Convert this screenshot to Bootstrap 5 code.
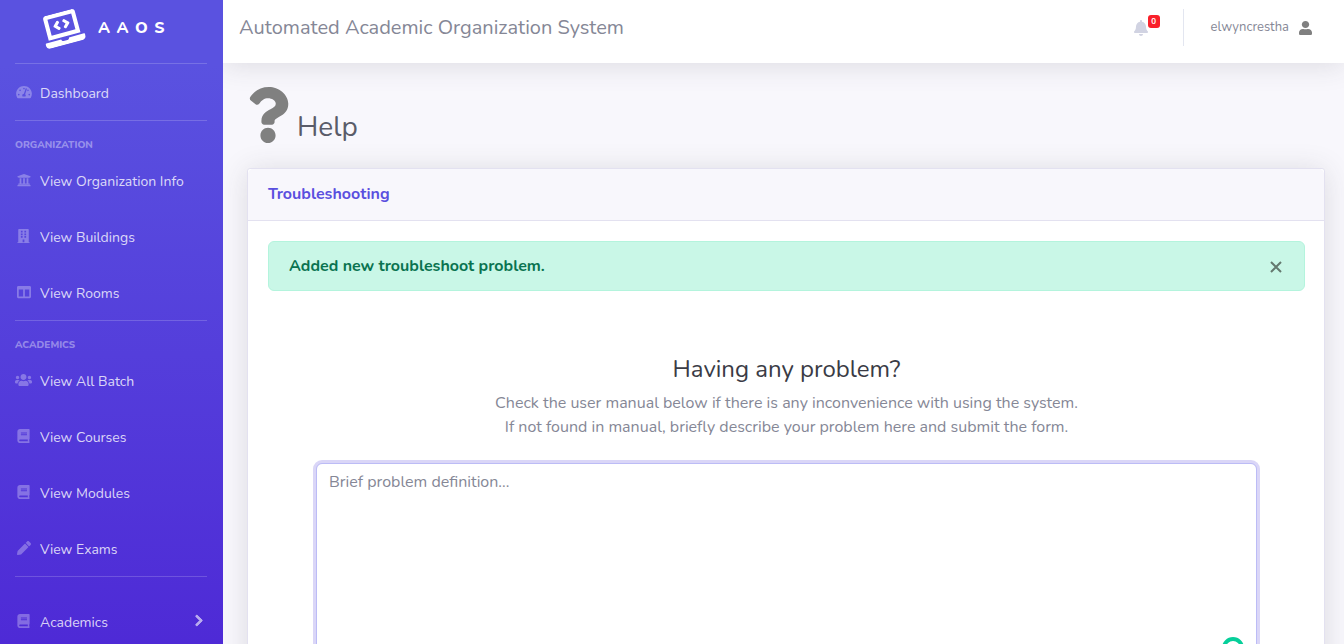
<!DOCTYPE html>
<html lang="en">
<head>
<meta charset="utf-8">
<meta name="viewport" content="width=device-width, initial-scale=1">
<title>Automated Academic Organization System</title>
<link rel="stylesheet" href="https://cdn.jsdelivr.net/npm/bootstrap@5.3.0/dist/css/bootstrap.min.css">
<style>
  body { font-family: Nunito, "Open Sans", sans-serif; font-size: 16px; color: #858796; background: #f8f7fc; }
  .fi { fill: currentColor; display: block; flex: none; }
  .side { width: 223px; flex: none; z-index: 1; background: linear-gradient(180deg, #5a52e0 10%, #4e2ad6 100%); }
  .brand { height: 56px; margin-bottom: 7px; padding-left: 42px; gap: 15px; color: #fff; font-weight: 800; letter-spacing: 1px; }
  .brand:hover { color: #fff; }
  .brand .fi { transform: rotate(-15deg); }
  .rule { border: 0; border-top: 1px solid #fff; opacity: .18; margin: 0 16px 0 15px; }
  .side-head { height: 31px; padding: 17px 15px 0; font-size: 10px; line-height: 14px; font-weight: 800; color: rgba(255,255,255,.4); margin: 0; }
  .side .nav-link { height: 56px; padding: 3px 20px 0 15px; font-size: 14px; line-height: 20px; color: rgba(255,255,255,.8); gap: 8px; }
  .side .nav-link svg { margin-bottom: 4px; }
  .ico { width: 17px; color: rgba(255,255,255,.3); display: flex; justify-content: center; flex: none; }
  .topbar { height: 63px; padding: 0 32px 8px 16px; background: #fff; box-shadow: 0 2px 28px rgba(58,59,69,.15); }
  .topbar h1 { font-size: 20px; font-weight: 400; }
  .bell { color: #d1d3e2; width: 14px; }
  .bell .badge { position: absolute; left: 14px; top: -5px; font-size: 8px; line-height: 13px; width: 12px; padding: 0; background: #f9202a; border-radius: 3px; }
  .vr-line { width: 1px; height: 37px; background: #e3e6f0; margin: 0 27px 0 35px; }
  .user { font-size: 13px; color: #858796; gap: 10px; }
  .gray { color: #808080; }
  .page { padding: 24px 19px 0 24px; }
  .page h2 { font-size: 28px; line-height: 32px; color: #5a5c69; font-weight: 400; }
  .title-row { margin-bottom: 25px; gap: 8px; }
  .panel { border: 1px solid #e3e1f0; border-radius: 3px; box-shadow: 0 2px 28px rgba(58,59,69,.15); color: #858796; }
  .panel .card-header { padding: 16px 20px; background: #f8f7fc; border-color: #e3e1f0; }
  .panel .card-header h3 { font-size: 16px; line-height: 19px; font-weight: 700; color: #5a4fdf; margin: 0; }
  .panel .card-body { padding: 20px 19px 20px 20px; }
  .done { background: #c9f7e7; border: 1px solid #b4f4dd; color: #0a7350; padding: 12px 20px; border-radius: 6px; }
  .shut { border: 0; background: none; padding: 2px 0 0; margin-right: 1px; color: #64796f; }
  .ask { padding: 62px 48px 24px; }
  .ask h4 { font-size: 24px; line-height: 32px; color: #3a3b45; font-weight: 400; margin-bottom: 6px; }
  .ask textarea, .ask textarea:focus { height: 256px; border: 1px solid #bcbcf6; border-radius: 6px; box-shadow: 0 0 0 3px #dad6f7; padding: 6px 12px; resize: none; }
  .ask textarea::placeholder { color: #858796; }
  .check { position: absolute; right: 13px; bottom: 60px; color: #06cf9a; }
</style>
</head>
<body>
<svg class="d-none" aria-hidden="true">
  <symbol id="book" viewBox="0 0 448 512"><path d="M448 360V24c0-13.3-10.7-24-24-24H96C43 0 0 43 0 96v320c0 53 43 96 96 96h328c13.3 0 24-10.7 24-24v-16c0-7.500-3.500-14.300-8.900-18.700-4.200-15.400-4.200-59.300 0-74.700 5.400-4.300 8.900-11.100 8.900-18.600zM128 134c0-3.300 2.700-6 6-6h212c3.300 0 6 2.700 6 6v20c0 3.300-2.700 6-6 6H134c-3.300 0-6-2.700-6-6v-20zm0 64c0-3.300 2.700-6 6-6h212c3.300 0 6 2.700 6 6v20c0 3.300-2.700 6-6 6H134c-3.300 0-6-2.700-6-6v-20zm253.400 250H96c-17.700 0-32-14.300-32-32 0-17.600 14.400-32 32-32h285.400c-1.900 17.100-1.900 46.900 0 64z"/></symbol>
</svg>
<div class="d-flex vh-100 overflow-hidden">
  <nav class="side position-relative" aria-label="Main">
    <a class="brand d-flex align-items-center text-decoration-none" href="#">
      <svg class="fi" width="41" height="33" viewBox="0 0 640 512" aria-hidden="true"><path d="M255.030 261.650c6.250 6.250 16.380 6.250 22.630 0l11.310-11.310c6.250-6.250 6.250-16.380 0-22.630L253.250 192l35.710-35.720c6.250-6.250 6.250-16.380 0-22.630l-11.310-11.310c-6.250-6.250-16.380-6.250-22.630 0l-58.340 58.340c-6.250 6.250-6.250 16.380 0 22.630l58.350 58.340zm96.010-11.300l11.310 11.310c6.250 6.250 16.380 6.250 22.630 0l58.340-58.340c6.250-6.250 6.250-16.380 0-22.630l-58.340-58.340c-6.250-6.250-16.380-6.250-22.630 0l-11.310 11.310c-6.250 6.250-6.250 16.380 0 22.630L386.750 192l-35.710 35.720c-6.250 6.250-6.250 16.380 0 22.630zM624 416H381.540c-.74 19.810-14.710 32-32.740 32H288c-18.690 0-33.020-17.470-32.770-32H16c-8.800 0-16 7.200-16 16v16c0 35.200 28.800 64 64 64h512c35.200 0 64-28.800 64-64v-16c0-8.800-7.200-16-16-16zM576 48c0-26.400-21.600-48-48-48H112C85.600 0 64 21.600 64 48v336h512V48zm-64 272H128V64h384v256z"/></svg>
      <span>A A O S</span>
    </a>
    <hr class="rule">
    <a class="nav-link d-flex align-items-center" href="#"><span class="ico"><svg class="fi" width="16" height="14" viewBox="0 0 576 512" aria-hidden="true"><path d="M288 32C128.940 32 0 160.940 0 320c0 52.800 14.250 102.260 39.060 144.800 5.610 9.620 16.300 15.200 27.440 15.200h443c11.140 0 21.830-5.580 27.440-15.200C561.750 422.260 576 372.800 576 320c0-159.060-128.940-288-288-288zm0 64c14.710 0 26.580 10.130 30.320 23.650-1.110 2.260-2.640 4.230-3.450 6.670l-9.220 27.670c-5.130 3.490-10.970 6.010-17.640 6.010-17.670 0-32-14.330-32-32S270.330 96 288 96zM96 384c-17.670 0-32-14.330-32-32s14.330-32 32-32 32 14.330 32 32-14.330 32-32 32zm48-160c-17.670 0-32-14.330-32-32s14.330-32 32-32 32 14.330 32 32-14.330 32-32 32zm246.770-72.410l-61.330 184C343.130 347.330 352 364.540 352 384c0 11.720-3.380 22.550-8.880 32H232.880c-5.500-9.450-8.880-20.280-8.880-32 0-33.940 26.500-61.430 59.900-63.590l61.340-184.010c4.170-12.560 17.730-19.450 30.360-15.170 12.570 4.190 19.350 17.790 15.170 30.360zm14.660 57.200l15.520-46.550c3.470-1.290 7.130-2.230 11.050-2.230 17.670 0 32 14.330 32 32s-14.330 32-32 32c-11.380-.01-21.250-6.100-26.570-15.220zM480 384c-17.670 0-32-14.330-32-32s14.330-32 32-32 32 14.330 32 32-14.330 32-32 32z"/></svg></span>Dashboard</a>
    <hr class="rule">
    <h6 class="side-head">ORGANIZATION</h6>
    <a class="nav-link d-flex align-items-center" href="#"><span class="ico"><svg class="fi" width="14" height="14" viewBox="0 0 512 512" aria-hidden="true"><path d="M496 128v16a8 8 0 0 1-8 8h-24v12c0 6.627-5.373 12-12 12H60c-6.627 0-12-5.373-12-12v-12H24a8 8 0 0 1-8-8v-16a8 8 0 0 1 4.941-7.392l232-88a7.996 7.996 0 0 1 6.118 0l232 88A8 8 0 0 1 496 128zm-24 304H40c-13.255 0-24 10.745-24 24v16a8 8 0 0 0 8 8h464a8 8 0 0 0 8-8v-16c0-13.255-10.745-24-24-24zM96 192v192H60c-6.627 0-12 5.373-12 12v20h416v-20c0-6.627-5.373-12-12-12h-36V192h-64v192h-64V192h-64v192h-64V192H96z"/></svg></span>View Organization Info</a>
    <a class="nav-link d-flex align-items-center" href="#"><span class="ico"><svg class="fi" width="13" height="14" viewBox="0 0 448 512" aria-hidden="true"><path fill-rule="evenodd" d="M436 480h-20V24c0-13.255-10.745-24-24-24H56C42.745 0 32 10.745 32 24v456H12c-6.627 0-12 5.373-12 12v20h448v-20c0-6.627-5.373-12-12-12zM128 64h64v64h-64zM256 64h64v64h-64zM128 160h64v64h-64zM256 160h64v64h-64zM128 256h64v64h-64zM256 256h64v64h-64zM192 384h64v96h-64z"/></svg></span>View Buildings</a>
    <a class="nav-link d-flex align-items-center" href="#"><span class="ico"><svg class="fi" width="14" height="14" viewBox="0 0 512 512" aria-hidden="true"><path d="M464 32H48C21.490 32 0 53.490 0 80v352c0 26.510 21.490 48 48 48h416c26.510 0 48-21.490 48-48V80c0-26.510-21.490-48-48-48zM224 416H64V160h160v256zm224 0H288V160h160v256z"/></svg></span>View Rooms</a>
    <hr class="rule">
    <h6 class="side-head">ACADEMICS</h6>
    <a class="nav-link d-flex align-items-center" href="#"><span class="ico"><svg class="fi" width="17" height="14" viewBox="0 0 640 512" aria-hidden="true"><path d="M96 224c35.300 0 64-28.700 64-64s-28.700-64-64-64-64 28.700-64 64 28.700 64 64 64zm448 0c35.300 0 64-28.700 64-64s-28.700-64-64-64-64 28.700-64 64 28.700 64 64 64zm32 32h-64c-17.600 0-33.500 7.100-45.100 18.600 40.300 22.100 68.900 62 75.100 109.400h66c17.700 0 32-14.300 32-32v-32c0-35.300-28.700-64-64-64zm-256 0c61.900 0 112-50.100 112-112S381.900 32 320 32 208 82.100 208 144s50.100 112 112 112zm76.800 32h-8.300c-20.800 10-43.900 16-68.500 16s-47.600-6-68.500-16h-8.300C179.600 288 128 339.600 128 403.200V432c0 26.500 21.500 48 48 48h288c26.500 0 48-21.500 48-48v-28.800c0-63.600-51.600-115.200-115.200-115.200zm-223.700-13.400C161.500 263.100 145.600 256 128 256H64c-35.300 0-64 28.700-64 64v32c0 17.700 14.300 32 32 32h65.900c6.300-47.400 34.900-87.300 75.200-109.400z"/></svg></span>View All Batch</a>
    <a class="nav-link d-flex align-items-center" href="#"><span class="ico"><svg class="fi" width="13" height="14" aria-hidden="true"><use href="#book"/></svg></span>View Courses</a>
    <a class="nav-link d-flex align-items-center" href="#"><span class="ico"><svg class="fi" width="13" height="14" aria-hidden="true"><use href="#book"/></svg></span>View Modules</a>
    <a class="nav-link d-flex align-items-center" href="#"><span class="ico"><svg class="fi" width="14" height="14" viewBox="0 0 512 512" aria-hidden="true"><path d="M497.900 142.100l-46.100 46.100c-4.700 4.700-12.300 4.700-17 0l-111-111c-4.700-4.700-4.700-12.300 0-17l46.100-46.100c18.700-18.700 49.100-18.700 67.900 0l60.100 60.100c18.800 18.700 18.800 49.100 0 67.900zM284.200 99.800L21.600 362.400.4 483.900c-2.900 16.400 11.400 30.600 27.800 27.800l121.500-21.300 262.600-262.600c4.700-4.700 4.700-12.300 0-17l-111-111c-4.800-4.700-12.400-4.700-17.100 0z"/></svg></span>View Exams</a>
    <hr class="rule mb-3">
    <a class="nav-link d-flex align-items-center" href="#"><span class="ico"><svg class="fi" width="13" height="14" aria-hidden="true"><use href="#book"/></svg></span>Academics
      <svg class="fi ms-auto opacity-75" width="8" height="13" viewBox="0 0 320 512" aria-hidden="true"><path stroke="currentColor" stroke-width="30" d="M285.476 272.971L91.132 467.314c-9.373 9.373-24.569 9.373-33.941 0l-22.667-22.667c-9.357-9.357-9.375-24.522-.04-33.901L188.505 256 34.484 101.255c-9.335-9.379-9.317-24.544.04-33.901l22.667-22.667c9.373-9.373 24.569-9.373 33.941 0L285.475 239.030c9.373 9.372 9.373 24.568.001 33.941z"/></svg></a>
  </nav>
  <div class="flex-grow-1">
    <header class="topbar d-flex align-items-center">
      <h1 class="mb-0 me-auto">Automated Academic Organization System</h1>
      <a class="bell position-relative" href="#" aria-label="Alerts"><svg class="fi" width="14" height="16" viewBox="0 0 448 512" aria-hidden="true"><path d="M224 512c35.320 0 63.970-28.650 63.970-64H160.030c0 35.350 28.650 64 63.970 64zm215.390-149.710c-19.320-20.760-55.470-51.990-55.470-154.290 0-77.700-54.480-139.900-127.940-155.160V32c0-17.670-14.320-32-31.980-32s-31.980 14.330-31.980 32v20.840C118.560 68.100 64.080 130.300 64.080 208c0 102.300-36.150 133.530-55.470 154.290-6 6.450-8.660 14.160-8.610 21.710.11 16.400 12.980 32 32.100 32h383.800c19.120 0 32-15.600 32.100-32 .05-7.550-2.610-15.270-8.610-21.710z"/></svg><span class="badge">0</span></a>
      <span class="vr-line"></span>
      <a class="user d-flex align-items-center text-decoration-none" href="#">elwyncrestha <svg class="fi gray" width="13" height="14" viewBox="0 0 448 512" preserveAspectRatio="none" aria-hidden="true"><path d="M224 256c70.700 0 128-57.300 128-128S294.700 0 224 0 96 57.300 96 128s57.300 128 128 128zm89.600 32h-16.700c-22.200 10.200-46.900 16-72.900 16s-50.600-5.800-72.900-16h-16.700C60.200 288 0 348.200 0 422.400V464c0 26.500 21.500 48 48 48h352c26.500 0 48-21.500 48-48v-41.600c0-74.200-60.200-134.400-134.400-134.400z"/></svg></a>
    </header>
    <main class="page">
      <div class="title-row d-flex align-items-end">
        <svg class="fi gray" width="42" height="56" viewBox="0 0 384 512" aria-hidden="true"><path d="M202.021 0C122.202 0 70.503 32.703 29.914 91.026c-7.363 10.580-5.093 25.086 5.178 32.874l43.138 32.709c10.373 7.865 25.132 6.026 33.253-4.148 25.049-31.381 43.630-49.449 82.757-49.449 30.764 0 68.816 19.799 68.816 49.631 0 22.552-18.617 34.134-48.993 51.164-35.423 19.860-82.299 44.576-82.299 106.405V320c0 13.255 10.745 24 24 24h72.471c13.255 0 24-10.745 24-24v-5.773c0-42.860 125.268-44.645 125.268-160.627C377.504 66.256 286.902 0 202.021 0zM192 373.459c-38.196 0-69.271 31.075-69.271 69.271 0 38.195 31.075 69.270 69.271 69.270s69.271-31.075 69.271-69.271-31.075-69.270-69.271-69.270z"/></svg>
        <h2 class="mb-0">Help</h2>
      </div>
      <section class="card panel">
        <div class="card-header"><h3>Troubleshooting</h3></div>
        <div class="card-body">
          <div class="done d-flex align-items-center" role="alert">
            <strong class="me-auto">Added new troubleshoot problem.</strong>
            <button class="shut" type="button" aria-label="Close"><svg class="d-block" width="14" height="14" viewBox="0 0 14 14" fill="none" stroke="currentColor" stroke-width="2" aria-hidden="true"><path d="M2 2l10 10M12 2L2 12"/></svg></button>
          </div>
          <form class="ask text-center">
            <h4>Having any problem?</h4>
            <p class="mb-4">Check the user manual below if there is any inconvenience with using the system.<br>If not found in manual, briefly describe your problem here and submit the form.</p>
            <div class="position-relative">
              <textarea class="form-control" aria-label="Brief problem definition" placeholder="Brief problem definition..."></textarea>
              <svg class="check" width="22" height="22" viewBox="0 0 22 22" fill="none" stroke="currentColor" stroke-width="4" aria-hidden="true"><circle cx="11" cy="11" r="9"/></svg>
            </div>
          </form>
        </div>
      </section>
    </main>
  </div>
</div>
<script src="https://cdn.jsdelivr.net/npm/bootstrap@5.3.0/dist/js/bootstrap.bundle.min.js"></script>
</body>
</html>
